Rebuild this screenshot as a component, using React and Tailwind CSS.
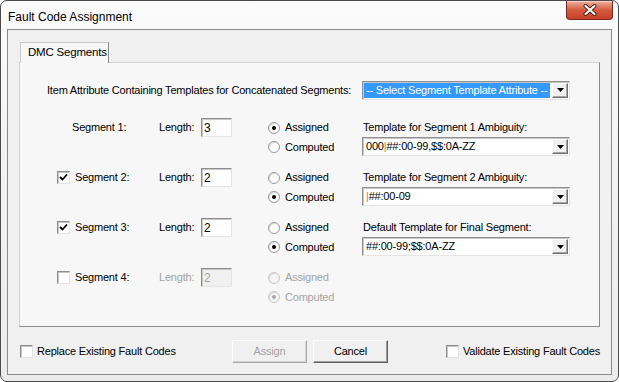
import React from 'react'

const FONT = { fontFamily: '"Liberation Sans", Arial, sans-serif' }

// ─── Small classic controls ──────────────────────────────────────────────────
function CheckBox({ checked = false }) {
  return (
    <div className="flex h-[13px] w-[13px] flex-shrink-0 items-center justify-center border border-t-[#8e8e8e] border-l-[#8e8e8e] border-r-[#e2e2e2] border-b-[#e2e2e2] bg-white shadow-[inset_1px_1px_0_#c4c4c4]">
      {checked && (
        <svg width="9" height="9" viewBox="0 0 9 9">
          <path d="M1 4 L3.5 6.5 L8 1.5" fill="none" stroke="#000" strokeWidth="1.8" />
        </svg>
      )}
    </div>
  )
}

function Radio({ checked = false, disabled = false }) {
  return (
    <div
      className={`flex h-[12px] w-[12px] flex-shrink-0 items-center justify-center rounded-full border ${
        disabled ? 'border-[#c8c8c8] bg-[#f4f4f4]' : 'border-[#9a9a9a] bg-white'
      } shadow-[inset_1px_1px_0_#dcdcdc]`}
    >
      {checked && (
        <div className={`h-[4px] w-[4px] rounded-full ${disabled ? 'bg-[#a8a8a8]' : 'bg-black'}`} />
      )}
    </div>
  )
}

function TextBox({ value, disabled = false }) {
  return (
    <div
      className={`flex h-[19px] w-[31px] items-center border border-t-[#8e8e8e] border-l-[#8e8e8e] border-r-[#e4e4e4] border-b-[#e4e4e4] pl-[2px] text-[12px] shadow-[inset_1px_1px_0_#c8c8c8] ${
        disabled ? 'bg-[#f0f0f0] text-[#a3a3a3]' : 'bg-white text-black'
      }`}
    >
      {value}
    </div>
  )
}

function DropArrow() {
  return (
    <div className="flex h-[15px] w-[16px] flex-shrink-0 items-center justify-center border border-t-[#fcfcfc] border-l-[#fcfcfc] border-r-[#6e6e6e] border-b-[#6e6e6e] bg-[#f0f0f0] shadow-[inset_-1px_-1px_0_#a8a8a8]">
      <svg width="7" height="4" viewBox="0 0 7 4">
        <path d="M0 0 H7 L3.5 4 Z" fill="#000" />
      </svg>
    </div>
  )
}

function Combo({ children, highlighted = false, className = '' }) {
  return (
    <div
      className={`flex h-[19px] w-[208px] items-center border border-t-[#8e8e8e] border-l-[#8e8e8e] border-r-[#e4e4e4] border-b-[#e4e4e4] bg-white pr-[1px] shadow-[inset_1px_1px_0_#c8c8c8] ${className}`}
    >
      <div
        className={`ml-[1px] mr-[2px] flex h-[15px] min-w-0 flex-1 items-center overflow-hidden whitespace-nowrap pl-[2px] ${
          highlighted ? 'bg-[#3399ff] text-white' : 'text-black'
        }`}
      >
        {children}
      </div>
      <DropArrow />
    </div>
  )
}

function Pipe() {
  return <span className="text-[#c97a2c]">|</span>
}

// ─── Segment rows ────────────────────────────────────────────────────────────
const SEGMENTS = [
  { n: 1, len: '3', check: null, radio: 'assigned', tLabel: 'Template for Segment 1 Ambiguity:', tValue: <>000<Pipe />##:00-99,$$:0A-ZZ</> },
  { n: 2, len: '2', check: true, radio: 'computed', tLabel: 'Template for Segment 2 Ambiguity:', tValue: <><Pipe />##:00-09</> },
  { n: 3, len: '2', check: true, radio: 'computed', tLabel: 'Default Template for Final Segment:', tValue: <>##:00-99;$$:0A-ZZ</> },
  { n: 4, len: '2', check: false, radio: 'computed', disabled: true },
]

function SegmentRow({ seg }) {
  const dim = seg.disabled ? 'text-[#a3a3a3]' : 'text-black'
  return (
    <div className="flex h-[50px] items-start pl-[37px]">
      {/* checkbox + label */}
      <div className={`flex h-[19px] w-[102px] items-center gap-[5px] ${seg.check === null ? 'pl-[15px]' : ''}`}>
        {seg.check !== null && <CheckBox checked={seg.check} />}
        <span className="text-black">Segment {seg.n}:</span>
      </div>

      <div className={`flex h-[19px] w-[42px] items-center ${dim}`}>Length:</div>
      <TextBox value={seg.len} disabled={seg.disabled} />

      {/* radios */}
      <div className="ml-[36px] flex w-[94px] flex-col">
        <div className={`flex h-[19px] items-center gap-[5px] ${dim}`}>
          <Radio checked={seg.radio === 'assigned'} disabled={seg.disabled} />
          Assigned
        </div>
        <div className={`flex h-[20px] items-center gap-[5px] ${dim}`}>
          <Radio checked={seg.radio === 'computed'} disabled={seg.disabled} />
          Computed
        </div>
      </div>

      {/* template */}
      {seg.tLabel && (
        <div className="flex flex-col">
          <div className="flex h-[19px] items-center pl-[1px]">{seg.tLabel}</div>
          <Combo>{seg.tValue}</Combo>
        </div>
      )}
    </div>
  )
}

function Button({ children, disabled = false }) {
  return (
    <div
      className={`flex h-[23px] w-[75px] items-center justify-center border bg-[#f0f0f0] ${
        disabled
          ? 'border-t-[#fdfdfd] border-l-[#fdfdfd] border-r-[#a8a8a8] border-b-[#a8a8a8] text-[#a3a3a3] shadow-[inset_-1px_-1px_0_#d4d4d4]'
          : 'border-t-[#fdfdfd] border-l-[#fdfdfd] border-r-[#5e5e5e] border-b-[#5e5e5e] text-black shadow-[inset_-1px_-1px_0_#a0a0a0]'
      }`}
    >
      {children}
    </div>
  )
}

// ─── Window ─────────────────────────────────────────────────────────────────
export default function App() {
  return (
    <div
      style={FONT}
      className="flex h-[382px] w-[619px] flex-col overflow-hidden whitespace-nowrap rounded-[7px] border border-[#4b4b4b] bg-gradient-to-b from-[#fbfbfb] via-[#f1f1f1] to-[#ececec] text-[11px] tracking-[-0.2px] text-black"
    >
      {/* Title bar */}
      <div className="flex h-[28px] items-start justify-between pl-[7px] pr-[5px] tracking-normal">
        <span className="mt-[7px] text-[12px]">Fault Code Assignment</span>
        <div className="flex h-[19px] w-[47px] items-center justify-center rounded-b-[4px] border border-t-0 border-[#7a2a1c] bg-gradient-to-b from-[#eab0a0] via-[#d45a3e] to-[#c8402a] shadow-[inset_0_1px_0_#f5d0c6]">
          <svg width="14" height="12" viewBox="0 0 14 12">
            <path d="M2.5 2 L11.5 10 M11.5 2 L2.5 10" stroke="#4a1a10" strokeWidth="4" strokeLinecap="round" />
            <path d="M2.5 2 L11.5 10 M11.5 2 L2.5 10" stroke="#fff" strokeWidth="2.2" strokeLinecap="round" />
          </svg>
        </div>
      </div>

      {/* Client area */}
      <div className="mx-[6px] mb-[6px] flex flex-1 flex-col border border-[#8a8a8a] bg-[#f0f0f0] pl-[11px] pr-[11px] pt-[12px]">
        {/* Tab */}
        <div className="relative z-10 -mb-[1px] ml-[1px] flex h-[21px] w-[89px] items-center border border-b-0 border-t-[#c9c9c9] border-l-[#c9c9c9] border-r-[#8a8a8a] bg-[#f7f7f7] pl-[7px] text-[11.5px]">
          DMC Segments
        </div>

        {/* Tab panel */}
        <div className="flex h-[265px] flex-col border border-t-[#d2d2d2] border-l-[#d2d2d2] border-r-[#8a8a8a] border-b-[#8a8a8a] bg-[#f7f7f7] pt-[18px]">
          <div className="flex h-[18px] items-center">
            <div className="w-[342px] pl-[27px]">
              Item Attribute Containing Templates for Concatenated Segments:
            </div>
            <Combo highlighted className="h-[18px] w-[207px]">
              -- Select Segment Template Attribute --
            </Combo>
          </div>

          <div className="mt-[19px] flex flex-col">
            {SEGMENTS.map((seg) => (
              <SegmentRow key={seg.n} seg={seg} />
            ))}
          </div>
        </div>

        {/* Bottom row */}
        <div className="mt-[13px] flex h-[23px] items-center">
          <div className="ml-[1px] flex w-[212px] items-center gap-[4px]">
            <CheckBox />
            Replace Existing Fault Codes
          </div>
          <Button disabled>Assign</Button>
          <div className="ml-[6px]">
            <Button>Cancel</Button>
          </div>
          <div className="ml-[58px] flex items-center gap-[4px]">
            <CheckBox />
            Validate Existing Fault Codes
          </div>
        </div>
      </div>
    </div>
  )
}
